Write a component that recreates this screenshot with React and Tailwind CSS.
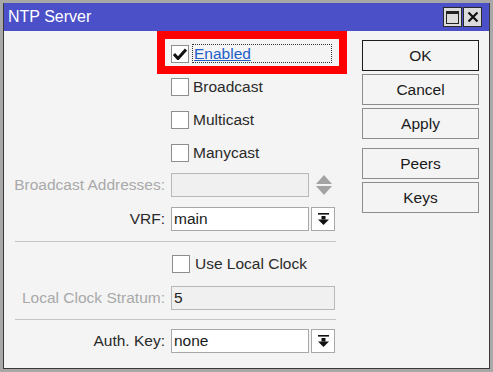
import React from 'react';

const font = { fontFamily: '"Liberation Sans", Arial, sans-serif' };

function Check({ checked }) {
  return (
    <div className="flex h-[18px] w-[18px] items-center justify-center border border-[#8e8e8e] bg-white">
      {checked && (
        <svg width="14" height="12" viewBox="0 0 14 12">
          <path d="M1 6 L5 10.5 L13 1.5" fill="none" stroke="#111" strokeWidth="3" />
        </svg>
      )}
    </div>
  );
}

function DropIcon() {
  return (
    <svg width="11" height="13" viewBox="0 0 11 13">
      <rect x="0" y="0" width="11" height="1.6" fill="#111" />
      <rect x="3.5" y="3" width="4" height="3.5" fill="#111" />
      <path d="M0 6.5 L11 6.5 L5.5 12 Z" fill="#111" />
    </svg>
  );
}

function CheckRow({ label, checked, focus }) {
  return (
    <div className="flex h-[33px] items-center">
      <div className="w-[167px]" />
      <Check checked={checked} />
      {focus ? (
        <div className="ml-[3px] flex h-[19px] w-[140px] items-center border border-dotted border-[#333] pl-[1px]">
          <span className="text-[15.5px] leading-none text-[#2160c8] underline">{label}</span>
        </div>
      ) : (
        <span className="ml-[4px] text-[15.5px] leading-none text-[#2a2a2a]">{label}</span>
      )}
    </div>
  );
}

function Label({ children, disabled }) {
  return (
    <div className={`w-[167px] pr-[6px] text-right text-[15.5px] leading-none ${disabled ? 'text-[#a9a9a9]' : 'text-[#2a2a2a]'}`}>
      {children}
    </div>
  );
}

function Button({ children, primary }) {
  return (
    <div
      className={`flex h-[31px] items-center justify-center border text-[15.5px] text-[#1a1a1a] ${
        primary ? 'border-[#1c1c1c]' : 'border-[#8c8c8c]'
      }`}
    >
      {children}
    </div>
  );
}

export default function App() {
  return (
    <div className="h-[372px] w-[493px] bg-[#a8a8a8] p-[3px]" style={font}>
      <div className="flex h-[366px] flex-col border-x border-b border-[#3a3a3a]">
        <div className="flex h-[28px] items-center bg-[#4b4fc8] pl-[4px] pr-[7px]">
          <span className="text-[16px] text-white">NTP Server</span>
          <div className="ml-auto flex gap-[1px]">
            <div className="flex h-[20px] w-[19px] items-center justify-center border border-[#2a2a2a] bg-[#dcdcdc]">
              <div className="h-[13px] w-[13px] border border-t-[3px] border-[#222]" />
            </div>
            <div className="flex h-[20px] w-[19px] items-center justify-center border border-[#2a2a2a] bg-[#dcdcdc]">
              <svg width="12" height="12" viewBox="0 0 12 12">
                <path d="M1.5 1.5 L10.5 10.5 M10.5 1.5 L1.5 10.5" stroke="#111" strokeWidth="2.2" />
              </svg>
            </div>
          </div>
        </div>

        <div className="relative flex flex-1 bg-[#f4f4f4]">
          <div className="absolute left-[153px] top-0 h-[43px] w-[190px] border-[8px] border-[#ff0000]" />

          <div className="flex w-[340px] flex-col pt-[6px]">
            <CheckRow label="Enabled" checked focus />
            <CheckRow label="Broadcast" />
            <CheckRow label="Multicast" />
            <CheckRow label="Manycast" />

            <div className="mt-[4px] flex h-[24px] items-center">
              <Label disabled>Broadcast Addresses:</Label>
              <div className="h-[24px] w-[138px] border border-[#b8b8b8] bg-[#f0f0f0]" />
              <div className="ml-[7px] flex flex-col items-center gap-[2px]">
                <svg width="16" height="9" viewBox="0 0 16 9">
                  <path d="M0 9 L8 0 L16 9 Z" fill="#a3a3a3" />
                </svg>
                <svg width="16" height="9" viewBox="0 0 16 9">
                  <path d="M0 0 L16 0 L8 9 Z" fill="#a3a3a3" />
                </svg>
              </div>
            </div>

            <div className="mt-[10px] flex h-[24px] items-center">
              <Label>VRF:</Label>
              <div className="flex h-[24px] w-[138px] items-center border border-[#a8a8a8] bg-white pl-[2px] text-[15.5px] text-[#1a1a1a]">
                main
              </div>
              <div className="ml-[2px] flex h-[24px] w-[24px] items-center justify-center border border-[#a8a8a8] bg-white">
                <DropIcon />
              </div>
            </div>

            <div className="ml-[11px] mt-[10px] h-px w-[321px] bg-[#c4c4c4]" />

            <div className="mt-[13px] flex h-[18px] items-center">
              <div className="w-[168px]" />
              <Check />
              <span className="ml-[5px] text-[15.5px] leading-none text-[#2a2a2a]">Use Local Clock</span>
            </div>

            <div className="mt-[13px] flex h-[24px] items-center">
              <Label disabled>Local Clock Stratum:</Label>
              <div className="flex h-[24px] w-[164px] items-center border border-[#b8b8b8] bg-[#f0f0f0] pl-[2px] text-[15.5px] text-[#222]">
                5
              </div>
            </div>

            <div className="ml-[11px] mt-[9px] h-px w-[321px] bg-[#c4c4c4]" />

            <div className="mt-[9px] flex h-[24px] items-center">
              <Label>Auth. Key:</Label>
              <div className="flex h-[24px] w-[138px] items-center border border-[#a8a8a8] bg-white pl-[2px] text-[15.5px] text-[#1a1a1a]">
                none
              </div>
              <div className="ml-[2px] flex h-[24px] w-[24px] items-center justify-center border border-[#a8a8a8] bg-white">
                <DropIcon />
              </div>
            </div>
          </div>

          <div className="ml-[18px] flex w-[117px] flex-col gap-[3px] pt-[9px]">
            <Button primary>OK</Button>
            <Button>Cancel</Button>
            <Button>Apply</Button>
            <div className="mt-[6px]">
              <Button>Peers</Button>
            </div>
            <Button>Keys</Button>
          </div>
        </div>
      </div>
    </div>
  );
}
